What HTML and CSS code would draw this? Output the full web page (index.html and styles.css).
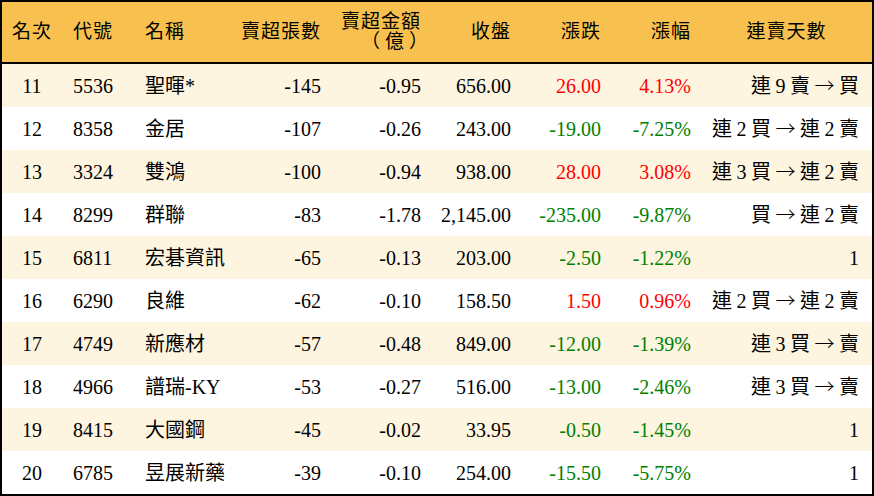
FILE: index.html
```html
<!DOCTYPE html>
<html lang="zh-Hant">
<head>
<meta charset="utf-8">
<title>賣超排行</title>
<link rel="stylesheet" href="styles.css">
</head>
<body>
<div class="frame">
<table class="rank">
<colgroup>
<col class="w-rank"><col class="w-code"><col class="w-name"><col class="w-lots"><col class="w-amt"><col class="w-close"><col class="w-chg"><col class="w-pct"><col class="w-days">
</colgroup>
<thead>
<tr>
<th class="ctr">名次</th>
<th class="lft code">代號</th>
<th class="lft name">名稱</th>
<th class="rgt">賣超張數</th>
<th class="rgt">賣超金額<br><span class="unit">（億）</span></th>
<th class="rgt">收盤</th>
<th class="rgt">漲跌</th>
<th class="rgt">漲幅</th>
<th class="ctr">連賣天數</th>
</tr>
</thead>
<tbody>
<tr class="alt"><td class="ctr">11</td><td class="lft code">5536</td><td class="lft name">聖暉*</td><td class="rgt">-145</td><td class="rgt">-0.95</td><td class="rgt">656.00</td><td class="rgt up">26.00</td><td class="rgt up">4.13%</td><td class="rgt days">連 9 賣 <span class="arw">→</span> 買</td></tr>
<tr><td class="ctr">12</td><td class="lft code">8358</td><td class="lft name">金居</td><td class="rgt">-107</td><td class="rgt">-0.26</td><td class="rgt">243.00</td><td class="rgt dn">-19.00</td><td class="rgt dn">-7.25%</td><td class="rgt days">連 2 買 <span class="arw">→</span> 連 2 賣</td></tr>
<tr class="alt"><td class="ctr">13</td><td class="lft code">3324</td><td class="lft name">雙鴻</td><td class="rgt">-100</td><td class="rgt">-0.94</td><td class="rgt">938.00</td><td class="rgt up">28.00</td><td class="rgt up">3.08%</td><td class="rgt days">連 3 買 <span class="arw">→</span> 連 2 賣</td></tr>
<tr><td class="ctr">14</td><td class="lft code">8299</td><td class="lft name">群聯</td><td class="rgt">-83</td><td class="rgt">-1.78</td><td class="rgt">2,145.00</td><td class="rgt dn">-235.00</td><td class="rgt dn">-9.87%</td><td class="rgt days">買 <span class="arw">→</span> 連 2 賣</td></tr>
<tr class="alt"><td class="ctr">15</td><td class="lft code">6811</td><td class="lft name">宏碁資訊</td><td class="rgt">-65</td><td class="rgt">-0.13</td><td class="rgt">203.00</td><td class="rgt dn">-2.50</td><td class="rgt dn">-1.22%</td><td class="rgt days">1</td></tr>
<tr><td class="ctr">16</td><td class="lft code">6290</td><td class="lft name">良維</td><td class="rgt">-62</td><td class="rgt">-0.10</td><td class="rgt">158.50</td><td class="rgt up">1.50</td><td class="rgt up">0.96%</td><td class="rgt days">連 2 買 <span class="arw">→</span> 連 2 賣</td></tr>
<tr class="alt"><td class="ctr">17</td><td class="lft code">4749</td><td class="lft name">新應材</td><td class="rgt">-57</td><td class="rgt">-0.48</td><td class="rgt">849.00</td><td class="rgt dn">-12.00</td><td class="rgt dn">-1.39%</td><td class="rgt days">連 3 買 <span class="arw">→</span> 賣</td></tr>
<tr><td class="ctr">18</td><td class="lft code">4966</td><td class="lft name">譜瑞-KY</td><td class="rgt">-53</td><td class="rgt">-0.27</td><td class="rgt">516.00</td><td class="rgt dn">-13.00</td><td class="rgt dn">-2.46%</td><td class="rgt days">連 3 買 <span class="arw">→</span> 賣</td></tr>
<tr class="alt"><td class="ctr">19</td><td class="lft code">8415</td><td class="lft name">大國鋼</td><td class="rgt">-45</td><td class="rgt">-0.02</td><td class="rgt">33.95</td><td class="rgt dn">-0.50</td><td class="rgt dn">-1.45%</td><td class="rgt days">1</td></tr>
<tr><td class="ctr">20</td><td class="lft code">6785</td><td class="lft name">昱展新藥</td><td class="rgt">-39</td><td class="rgt">-0.10</td><td class="rgt">254.00</td><td class="rgt dn">-15.50</td><td class="rgt dn">-5.75%</td><td class="rgt days">1</td></tr>
</tbody>
</table>
</div>
</body>
</html>
```
FILE: styles.css
```css
html, body {
  margin: 0;
  padding: 0;
  background: #ffffff;
}

.frame {
  width: 874px;
  height: 496px;
  box-sizing: border-box;
  border: 2px solid #000000;
  overflow: hidden;
}

.rank {
  width: 870px;
  table-layout: fixed;
  border-collapse: separate;
  border-spacing: 0;
  font-family: "Liberation Serif", "Noto Sans CJK TC", serif;
  font-size: 20px;
  color: #000000;
}

.w-rank { width: 60px; }
.w-code { width: 73px; }
.w-name { width: 95px; }
.w-lots { width: 101px; }
.w-amt { width: 100px; }
.w-close { width: 90px; }
.w-chg { width: 90px; }
.w-pct { width: 90px; }
.w-days { width: 171px; }

.rank th {
  height: 60px;
  padding: 0 10px 0 0;
  background: #f8c14f;
  border-bottom: 2px solid #000000;
  font-weight: normal;
  font-size: 19px;
  letter-spacing: 1px;
  line-height: 20px;
  white-space: nowrap;
  vertical-align: middle;
}

.unit {
  letter-spacing: 5px;
  margin-right: -12px;
}

.rank td {
  height: 43px;
  padding: 0 10px 0 0;
  line-height: 22px;
  white-space: nowrap;
  vertical-align: middle;
}

.rank tr.alt td {
  background: #fef5e0;
}

.ctr { text-align: center; }
.lft { text-align: left; }
.rgt { text-align: right; }

.rank .ctr { padding-right: 0; }
.rank th:last-child { padding-left: 0; padding-right: 0; }

.rank .code { padding-left: 11px; padding-right: 0; }
.rank .name { padding-left: 10px; padding-right: 0; }

.rank td.days {
  padding-right: 13px;
  word-spacing: -0.5px;
}

.arw {
  font-family: "Noto Sans CJK TC", sans-serif;
  font-weight: 300;
}

.up { color: #ff0000; }
.dn { color: #008000; }
```
